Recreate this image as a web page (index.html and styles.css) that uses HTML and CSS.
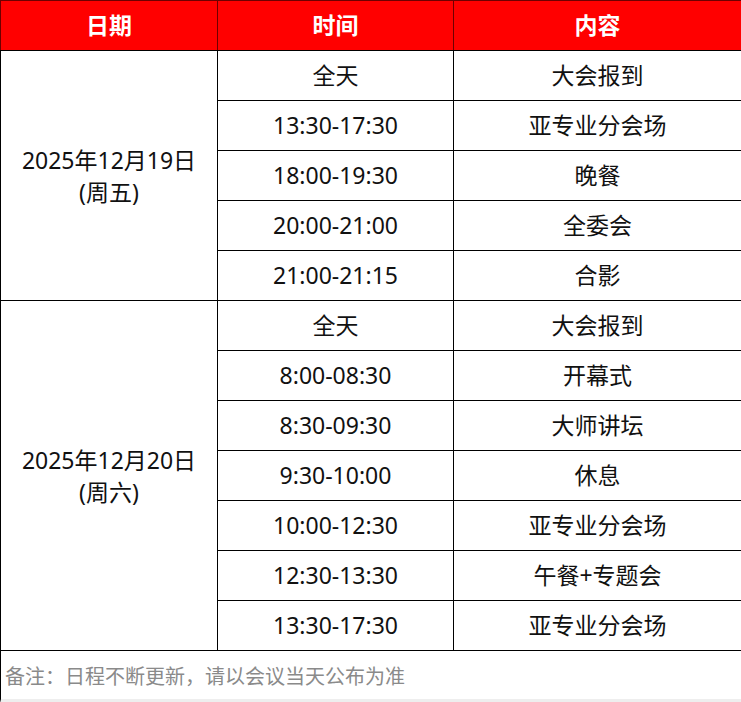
FILE: index.html
```html
<!DOCTYPE html>
<html lang="zh-CN">
<head>
<meta charset="utf-8">
<title>日程</title>
<link rel="stylesheet" href="styles.css">
</head>
<body>
<table class="schedule">
  <colgroup>
    <col class="c-date">
    <col class="c-time">
    <col class="c-content">
  </colgroup>
  <thead>
    <tr class="head">
      <th>日期</th>
      <th>时间</th>
      <th>内容</th>
    </tr>
  </thead>
  <tbody>
    <tr>
      <td class="date" rowspan="5">2025年12月19日<br>(周五)</td>
      <td>全天</td>
      <td>大会报到</td>
    </tr>
    <tr><td>13:30-17:30</td><td>亚专业分会场</td></tr>
    <tr><td>18:00-19:30</td><td>晚餐</td></tr>
    <tr><td>20:00-21:00</td><td>全委会</td></tr>
    <tr><td>21:00-21:15</td><td>合影</td></tr>
    <tr>
      <td class="date" rowspan="7">2025年12月20日<br>(周六)</td>
      <td>全天</td>
      <td>大会报到</td>
    </tr>
    <tr><td>8:00-08:30</td><td>开幕式</td></tr>
    <tr><td>8:30-09:30</td><td>大师讲坛</td></tr>
    <tr><td>9:30-10:00</td><td>休息</td></tr>
    <tr><td>10:00-12:30</td><td>亚专业分会场</td></tr>
    <tr><td>12:30-13:30</td><td>午餐+专题会</td></tr>
    <tr><td>13:30-17:30</td><td>亚专业分会场</td></tr>
  </tbody>
</table>
<div class="note">备注：日程不断更新，请以会议当天公布为准</div>
</body>
</html>
```

FILE: styles.css
```css
html, body {
  margin: 0;
  padding: 0;
  background: #ffffff;
}
body {
  width: 741px;
  font-family: "Noto Sans", "Noto Sans CJK SC", sans-serif;
  color: #111111;
}
.schedule {
  width: 741px;
  border-collapse: collapse;
  table-layout: fixed;
}
.c-date { width: 217px; }
.c-time { width: 236px; }
.c-content { width: 288px; }
.schedule th,
.schedule td {
  height: 49px;
  padding: 0;
  text-align: center;
  vertical-align: middle;
  border: 1px solid #000000;
  font-size: 23px;
  line-height: 1.4;
  font-weight: 400;
}
.head th {
  background: #ff0000;
  color: #ffffff;
  font-weight: 700;
  border-color: #6e0000;
  border-bottom-color: #000000;
}
.schedule td.date {
  line-height: 32px;
}
.note {
  height: 48px;
  border-left: 1px solid #000000;
  border-bottom: 4px solid #eeeeee;
  padding-left: 4px;
  display: flex;
  align-items: center;
  font-size: 20px;
  color: #8a8a8a;
}
```
